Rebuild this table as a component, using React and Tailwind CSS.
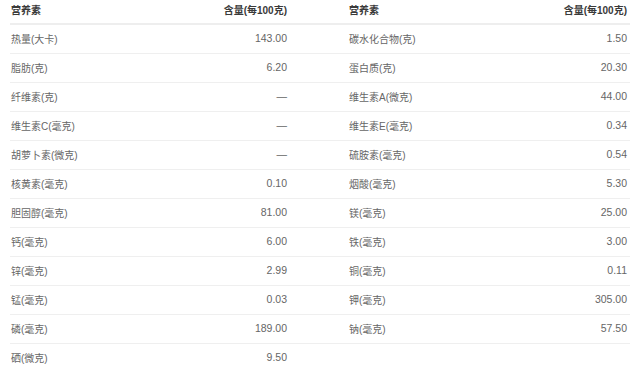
const left = [
  ["热量(大卡)", "143.00"],
  ["脂肪(克)", "6.20"],
  ["纤维素(克)", "—"],
  ["维生素C(毫克)", "—"],
  ["胡萝卜素(微克)", "—"],
  ["核黄素(毫克)", "0.10"],
  ["胆固醇(毫克)", "81.00"],
  ["钙(毫克)", "6.00"],
  ["锌(毫克)", "2.99"],
  ["锰(毫克)", "0.03"],
  ["磷(毫克)", "189.00"],
  ["硒(微克)", "9.50"],
];

const right = [
  ["碳水化合物(克)", "1.50"],
  ["蛋白质(克)", "20.30"],
  ["维生素A(微克)", "44.00"],
  ["维生素E(毫克)", "0.34"],
  ["硫胺素(毫克)", "0.54"],
  ["烟酸(毫克)", "5.30"],
  ["镁(毫克)", "25.00"],
  ["铁(毫克)", "3.00"],
  ["铜(毫克)", "0.11"],
  ["钾(毫克)", "305.00"],
  ["钠(毫克)", "57.50"],
];

const NutrientTable = ({ rows, padClass }) => {
  return (
    <div className="w-[310px] flex flex-col">
      <div
        className={`h-[25px] flex items-center justify-between border-b-2 border-[#eeeeee] pb-[2px] font-bold text-[#3a3a3a] text-[10px] ${padClass}`}
      >
        <span>营养素</span>
        <span>含量(每100克)</span>
      </div>
      {rows.map(([name, value]) => (
        <div
          key={name}
          className={`h-[29px] flex items-center justify-between border-b border-[#efefef] text-[#666666] ${padClass}`}
        >
          <span className="text-[10px]">{name}</span>
          <span>{value}</span>
        </div>
      ))}
    </div>
  );
};

export default function App() {
  return (
    <div
      className="w-[640px] h-[371px] overflow-hidden bg-white pl-[10px] flex items-start text-[10.5px]"
      style={{ fontFamily: '"Liberation Sans", "Noto Sans CJK SC", sans-serif' }}
    >
      <NutrientTable rows={left} padClass="pl-[1px] pr-[33px]" />
      <NutrientTable rows={right} padClass="pl-[29px] pr-[3px]" />
    </div>
  );
}
